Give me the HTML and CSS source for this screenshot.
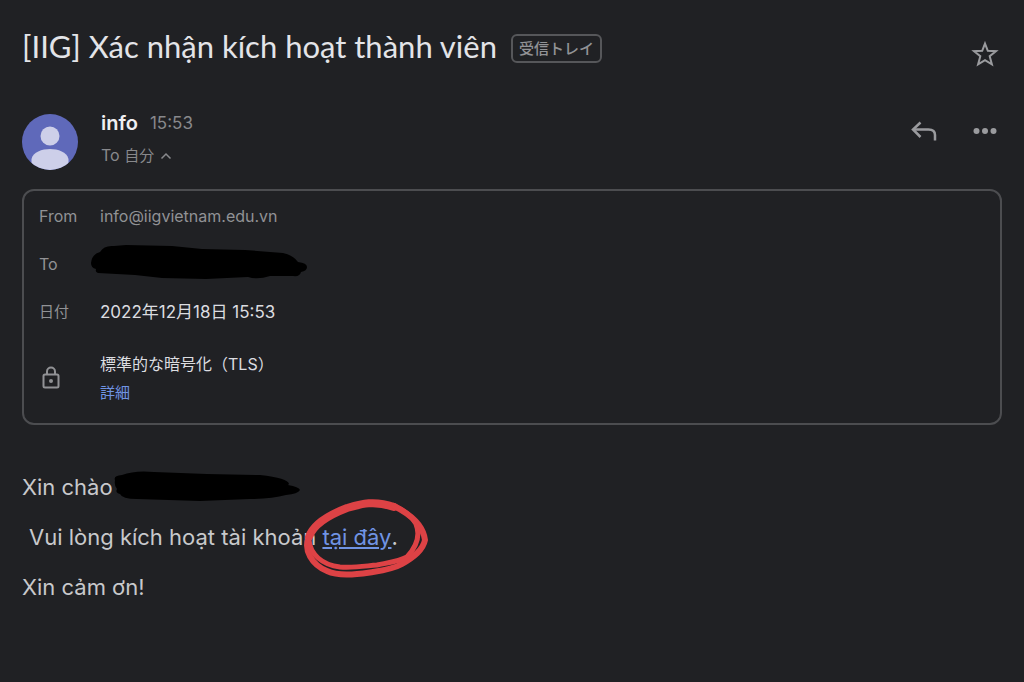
FILE: index.html
```html
<!DOCTYPE html>
<html lang="vi">
<head>
<meta charset="utf-8">
<meta name="viewport" content="width=device-width, initial-scale=1">
<title>[IIG] Xác nhận kích hoạt thành viên</title>
<link rel="stylesheet" href="styles.css">
</head>
<body>
<main class="mail">
  <header class="subject">
    <h1 class="subject-title">[IIG] Xác nhận kích hoạt thành viên</h1>
    <span class="label" lang="ja">受信トレイ</span>
    <button class="icon-button star" type="button" aria-label="Star">
      <svg width="28" height="28" viewBox="0 0 28 28" fill="none" stroke="currentColor" stroke-width="2"><path d="M14 3.600 L16.800 10.800 L25 11.200 L18.700 16.200 L20.900 24.400 L14 20.200 L7.100 24.400 L9.300 16.200 L3 11.200 L11.200 10.800 Z"/></svg>
    </button>
  </header>

  <section class="sender">
    <svg class="avatar" width="56" height="56" viewBox="0 0 56 56" aria-hidden="true">
      <defs><clipPath id="disc"><circle cx="28" cy="28" r="28"/></clipPath></defs>
      <g clip-path="url(#disc)">
        <rect width="56" height="56" fill="#5f69ba"/>
        <circle cx="28" cy="22" r="9.500" fill="#cdcfe9"/>
        <path d="M9.500 56 V45 C11 38 20 35 28 35 S45 38 46.500 45 V56 Z" fill="#cdcfe9"/>
      </g>
    </svg>
    <div class="sender-text">
      <div class="sender-line"><strong class="sender-name">info</strong><time class="sender-time">15:53</time></div>
      <button class="recipient" type="button" aria-expanded="true"><span>To <span class="small" lang="ja">自分</span></span>
        <svg width="12" height="8" viewBox="0 0 12 8" fill="none" stroke="currentColor" stroke-width="1.500"><path d="M1.500 6.500 L6 2 L10.500 6.500"/></svg>
      </button>
    </div>
    <div class="actions">
      <button class="icon-button" type="button" aria-label="Reply">
        <svg width="28" height="28" viewBox="0 0 28 28" fill="none" stroke="currentColor" stroke-width="2.500"><path d="M10.500 5.500 L3 12.500 L10.500 20"/><path d="M3.500 12.500 H18.500 Q25 12.500 25 18 V23.500"/></svg>
      </button>
      <button class="icon-button" type="button" aria-label="More">
        <svg width="28" height="28" viewBox="0 0 28 28" fill="currentColor"><circle cx="5.500" cy="14" r="3"/><circle cx="14" cy="14" r="3"/><circle cx="22.500" cy="14" r="3"/></svg>
      </button>
    </div>
  </section>

  <dl class="details">
    <dt>From</dt>
    <dd>info@iigvietnam.edu.vn</dd>
    <dt>To</dt>
    <dd class="redacted">
      <svg class="ink ink-address" width="218" height="36" viewBox="0 0 218 36" aria-hidden="true"><path d="M1 19 Q2 10 10 8 Q14 1 24 2 L36 1 L82 2 L112 5 L155 6 L193 9 Q203 11 208 18 Q217 19 217 23 Q217 27 211 28 Q210 33 203 32 L180 32 Q168 36 158 33 L116 35 L72 34 L45 31 L8 29 Q5 28 6 25 Q1 24 1 19 Z"/></svg>
    </dd>
    <dt class="small" lang="ja">日付</dt>
    <dd class="bright date" lang="ja">2022年12月18日 15:53</dd>
    <dt class="security-icon">
      <svg width="18" height="24" viewBox="0 0 18 24" role="img" aria-label="Security" fill="none" stroke="currentColor" stroke-width="2"><rect x="1.500" y="8.500" width="15" height="13" rx="1.500"/><path d="M5 8.500 V5.500 A4 4 0 0 1 13 5.500 V8.500"/><circle cx="9" cy="15" r="2" fill="currentColor" stroke="none"/></svg>
    </dt>
    <dd class="bright security" lang="ja">標準的な暗号化（TLS）<a class="more small" href="#">詳細</a></dd>
  </dl>

  <article class="message">
    <p>Xin chào <span class="redacted"><svg class="ink ink-name" width="188" height="32" viewBox="0 0 188 32" aria-hidden="true"><path d="M3 10 Q1 6 10 5 Q23 0 42 2 L95 4 L148 5 Q176 8 177 14 L176 15 Q187 17 188 20 Q186 24 174 25 Q160 29 138 29 L88 31 L25 29 Q10 29 8 24 Q3 23 5 19 Q2 16 3 10 Z"/></svg></span></p>
    <p class="indented">Vui lòng kích hoạt tài khoản <span class="circled"><a href="#">tại đây</a><svg class="ring" width="130" height="84" viewBox="0 0 130 84" fill="none" stroke="#dd4245" stroke-linecap="round" stroke-linejoin="round" aria-hidden="true"><path stroke-width="8" d="M92 9 C72 2 59 6 45 10 C32 15 12 24 7 39"/><path stroke-width="6" d="M7 39 C1 52 10 67 25 73 C38 79 56 76 71 74 C84 72 93 70 100 66 C112 59 121 52 123 42 C121 26 106 15 92 8"/><path stroke-width="5" d="M7 42 C8 56 20 67 38 69 C52 70 63 68 75 67 C90 64 98 63 105 59 C116 47 118 36 114 26 C110 18 101 12 92 8"/></svg></span>.</p>
    <p>Xin cảm ơn!</p>
  </article>
</main>
</body>
</html>
```
FILE: styles.css
```css
* { box-sizing: border-box; }

body {
  margin: 0;
  min-height: 100vh;
  background: #202124;
  color: #c8c9cc;
  font-family: Inter, "Noto Sans CJK JP", sans-serif;
  font-size: 16px;
  line-height: 24px;
}

button {
  padding: 0;
  border: 0;
  background: none;
  color: inherit;
  font: inherit;
  cursor: pointer;
}

svg { display: block; }

a { color: #7094e4; }

.small { font-size: 15px; }

.mail { padding: 26px 22px; }

.subject {
  display: flex;
  align-items: flex-start;
  gap: 14px;
}

.subject-title {
  margin: 0;
  color: #e3e4e8;
  font-family: Lato, sans-serif;
  font-size: 31px;
  font-weight: 400;
  line-height: 40px;
}

.label {
  margin-top: 8px;
  padding: 0 6px;
  border: 2px solid #56575a;
  border-radius: 6px;
  color: #929396;
  font-size: 15px;
  font-weight: 500;
  line-height: 25px;
}

.icon-button { color: #9a9b9e; }

.star { margin: 14px 3px 0 auto; }

.sender {
  display: flex;
  margin-top: 43px;
  gap: 23px;
}

.avatar { margin-top: 3px; }

.sender-text {
  display: flex;
  flex-direction: column;
  align-items: flex-start;
  gap: 8px;
}

.sender-line {
  display: flex;
  gap: 12px;
}

.sender-name {
  color: #f0f0f2;
  font-size: 20px;
  font-weight: 600;
}

.sender-time {
  color: #88898c;
  font-size: 17px;
}

.recipient {
  display: flex;
  align-items: center;
  gap: 6px;
  color: #88898c;
}

.actions {
  display: flex;
  gap: 33px;
  margin: 6px 3px 0 auto;
  height: 28px;
}

.details {
  display: grid;
  grid-template-columns: 61px 1fr;
  row-gap: 24px;
  margin: 19px 0 0;
  padding: 13px 15px 18px;
  border: 2px solid #4c4d50;
  border-radius: 12px;
  color: #919295;
}

.details dt, .details dd { margin: 0; }

.details .bright { color: #dcdde0; }

.details .date { font-size: 17px; }

.security-icon { padding: 18px 0 0 3px; }

.security {
  display: flex;
  flex-direction: column;
  align-items: flex-start;
  gap: 5px;
  margin-top: 4px;
  padding-top: 4px;
}

.more { text-decoration: none; }

.redacted { position: relative; }

.ink {
  position: absolute;
  fill: #000;
}

.ink-address { left: -10px; top: -8px; }

.ink-name { left: -1px; top: -4px; }

.message {
  margin-top: 46px;
  font-size: 22px;
  line-height: 32px;
}

.message p { margin: 0 0 18px; }

.message .indented { padding-left: 7px; }

.circled { position: relative; }

.ring {
  position: absolute;
  left: -20px;
  top: -26px;
  pointer-events: none;
}
```
